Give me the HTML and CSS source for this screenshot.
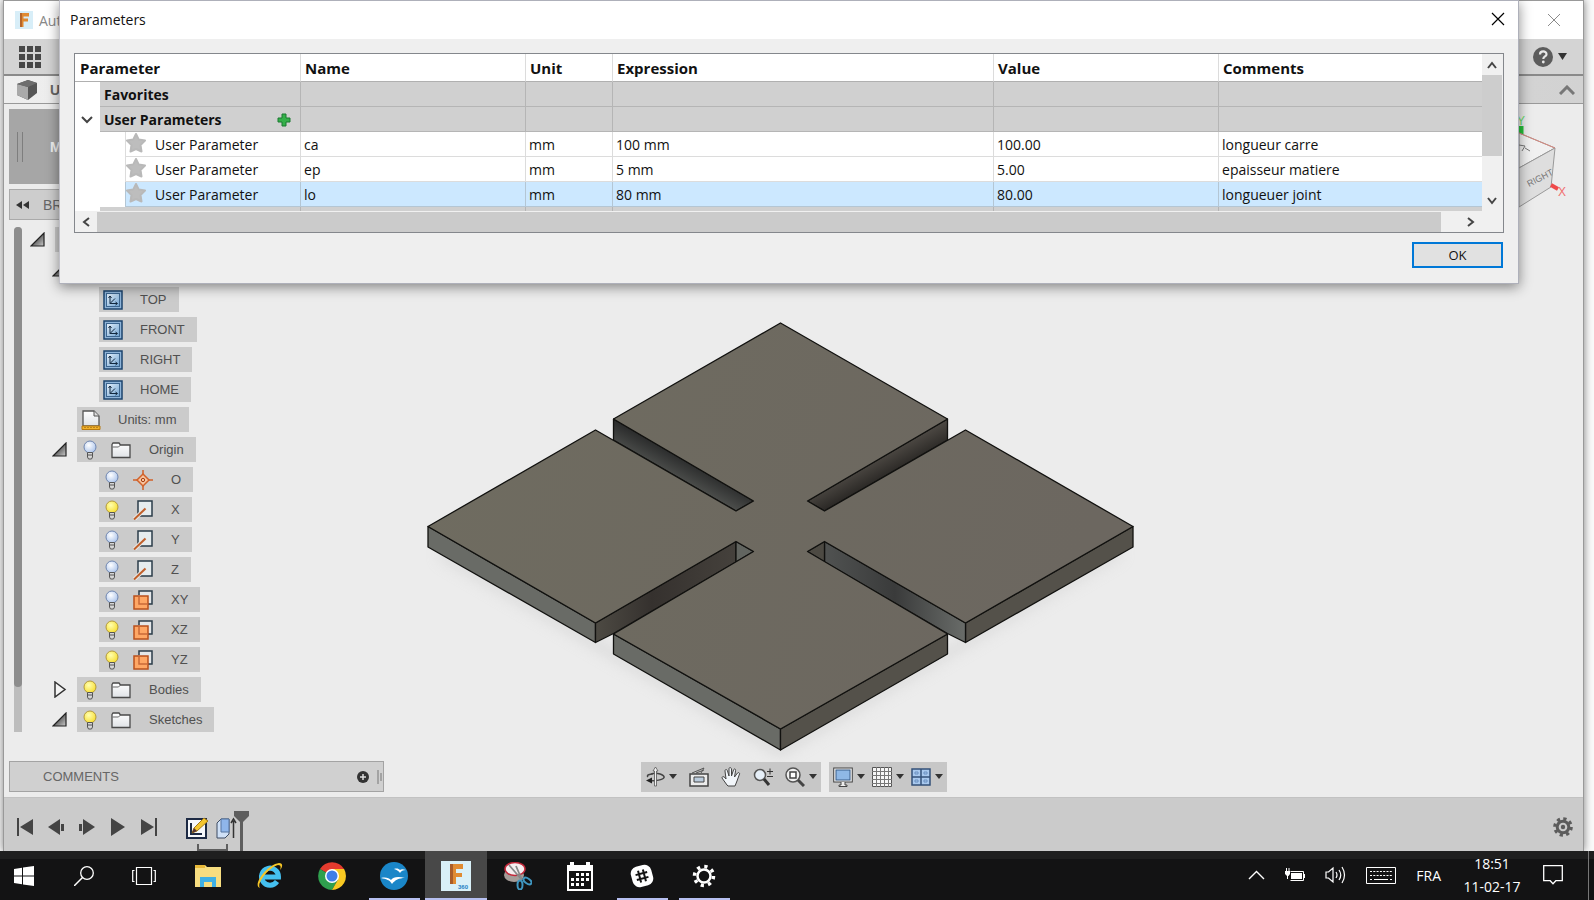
FILE: index.html
```html
<!DOCTYPE html>
<html lang="fr">
<head>
<meta charset="utf-8">
<title>Parameters</title>
<link rel="stylesheet" href="styles.css">
</head>
<body>
<svg class="defs" width="0" height="0" aria-hidden="true">
  <defs>
    <linearGradient id="gBlue" x1="0" y1="0" x2="1" y2="1"><stop offset="0" stop-color="#e6f1fb"/><stop offset="1" stop-color="#6fa3d2"/></linearGradient>
    <linearGradient id="gPaper" x1="0" y1="0" x2="0" y2="1"><stop offset="0" stop-color="#fff"/><stop offset="1" stop-color="#dfe2e6"/></linearGradient>
    <linearGradient id="gTri" x1="0" y1="0" x2="1" y2="1"><stop offset="0.4" stop-color="#555"/><stop offset="1" stop-color="#ccc"/></linearGradient>
    <radialGradient id="gOff" cx="0.4" cy="0.35" r="0.7"><stop offset="0" stop-color="#fff"/><stop offset="1" stop-color="#a9c2ea"/></radialGradient>
    <radialGradient id="gOn" cx="0.4" cy="0.35" r="0.7"><stop offset="0" stop-color="#ffffb0"/><stop offset="1" stop-color="#f7dc2c"/></radialGradient>
    <symbol id="view" viewBox="0 0 20 20"><rect x="1" y="1" width="18" height="18" fill="#8fb4d8" stroke="#1c446e" stroke-width="1.500"/><rect x="3.500" y="3.500" width="13" height="13" fill="url(#gBlue)" stroke="#3c6690"/><path d="M7 6v7.500h7M7 13.500l5-5M5.500 8 7 6l1.500 2M12.500 12l2 1.500-2 1.500" fill="none" stroke="#12283f"/></symbol>
    <symbol id="off" viewBox="0 0 16 20"><circle cx="8" cy="7" r="6" fill="url(#gOff)" stroke="#6f86b0"/><path d="M5.500 12.500h5V17L9.500 19h-3l-1-2z" fill="#d5d5d5" stroke="#555"/><path d="M5 15h6" stroke="#555"/></symbol>
    <symbol id="on" viewBox="0 0 16 20"><circle cx="8" cy="7" r="6" fill="url(#gOn)" stroke="#b39a3c"/><path d="M5.500 12.500h5V17L9.500 19h-3l-1-2z" fill="#d5d5d5" stroke="#555"/><path d="M5 15h6" stroke="#555"/></symbol>
    <symbol id="folder" viewBox="0 0 20 18"><path d="M1 3.500 2 2h6l1.500 2H19v12.500H1z" fill="url(#gPaper)" stroke="#4a4a4a" stroke-width="1.300"/><path d="M1.500 6h6l2-2" fill="none" stroke="#666"/></symbol>
    <symbol id="axis" viewBox="0 0 20 20"><path d="M5 1h14v15H5z" fill="#e6ecee" stroke="#2b3d49" stroke-width="1.500"/><path d="M1 19.500 12.500 8.500" stroke="#e8e8e8" stroke-width="4"/><path d="M1 19.500 12.500 8.500" stroke="#c0602b" stroke-width="2"/></symbol>
    <symbol id="plane" viewBox="0 0 20 20"><path d="M6 5V1h13v13h-4" fill="#e4e7e9" stroke="#2b3d49" stroke-width="1.500"/><rect x="1" y="6" width="14" height="13" fill="#ffa765" stroke="#b9501d" stroke-width="1.500"/><path d="M6 6v8h9" fill="none" stroke="#c96a38" stroke-width="1.500"/></symbol>
    <symbol id="open" viewBox="0 0 15 15"><path d="M1 14 14 1v13z" fill="url(#gTri)" stroke="#222" stroke-width="1.200"/></symbol>
    <symbol id="star" viewBox="0 0 20 20"><path d="M10 1l2.800 5.600 6.200.9-4.500 4.500 1 6.500L10 16l-5.500 2.500 1-6.500L1 7.500l6.200-.9z" fill="#bdbdbd" stroke="#b9b9b9" stroke-width="2" stroke-linejoin="round"/></symbol>
    <symbol id="down" viewBox="0 0 8 5"><path d="M0 0h8L4 5z" fill="#333"/></symbol>
    <linearGradient id="wallL" gradientUnits="userSpaceOnUse" x1="690" y1="462" x2="678" y2="484"><stop offset="0" stop-color="#2c2d2d"/><stop offset="1" stop-color="#555754"/></linearGradient>
    <linearGradient id="wallR" gradientUnits="userSpaceOnUse" x1="871" y1="462" x2="883" y2="484"><stop offset="0" stop-color="#4a4641"/><stop offset="1" stop-color="#211f1d"/></linearGradient>
    <linearGradient id="wallB" x1="0" y1="0" x2="1" y2="0"><stop offset="0" stop-color="#4d4a43"/><stop offset=".4" stop-color="#35312e"/><stop offset="1" stop-color="#45413c"/></linearGradient>
    <linearGradient id="wallC" x1="0" y1="0" x2="1" y2="0"><stop offset="0" stop-color="#505251"/><stop offset=".5" stop-color="#3a3b3b"/><stop offset="1" stop-color="#696c69"/></linearGradient>
    <linearGradient id="face" x1="0" y1="0" x2="1" y2="0.200"><stop offset="0" stop-color="#6f6c60"/><stop offset="1" stop-color="#6c6760"/></linearGradient>
    <filter id="soft" x="-10%" y="-10%" width="120%" height="130%"><feGaussianBlur stdDeviation="7"/></filter>
  </defs>
</svg>

<div class="desktop">
  <main class="app">
    <header class="app-title">
      <svg width="18" height="18" viewBox="0 0 18 18"><rect width="18" height="18" fill="#d8eef8"/><path d="M5 2h9v3.500H8.500v2H13v3H8.500V16H5z" fill="#e08a32"/><path d="M5 2h2v14H5z" fill="#b5652a"/></svg>
      <span>Aut</span>
      <button class="icon app-close" aria-label="Close application"><svg width="14" height="14" viewBox="0 0 14 14"><path d="M1 1l12 12M13 1 1 13" stroke="#8b8b8b" fill="none"/></svg></button>
    </header>
    <div class="toolbar">
      <button class="icon" aria-label="Data panel"><svg width="22" height="22" viewBox="0 0 22 22" fill="#484848"><path d="M0 0h6v6H0zM8 0h6v6H8zM16 0h6v6h-6zM0 8h6v6H0zM8 8h6v6H8zM16 8h6v6h-6zM0 16h6v6H0zM8 16h6v6H8zM16 16h6v6h-6z"/></svg></button>
      <button class="icon help" aria-label="Help"><svg width="34" height="20" viewBox="0 0 34 20"><circle cx="10" cy="10" r="10" fill="#5c5c5c"/><path d="M7 7.500c0-4 6.500-4 6.500-.3C13.500 9.500 10.300 9.500 10.300 12" fill="none" stroke="#e8e8e8" stroke-width="2.200"/><circle cx="10.300" cy="15" r="1.400" fill="#e8e8e8"/><path d="M25 6h9l-4.500 7z" fill="#333"/></svg></button>
    </div>
    <div class="tabs">
      <svg width="22" height="20" viewBox="0 0 22 20"><path d="M1 4 12 0l9 3v10l-9 7L1 15z" fill="#565656"/><path d="M1 4l11 3v13L1 15z" fill="#a9a9a9"/><path d="M1 4 12 0l9 3-9 4z" fill="#6d6d6d"/></svg>
      <span>U</span>
      <button class="icon fold" aria-label="Collapse ribbon"><svg width="16" height="10" viewBox="0 0 16 10"><path d="M1 9l7-7 7 7" fill="none" stroke="#777" stroke-width="3"/></svg></button>
    </div>

    <section class="work">
      <svg class="scene" viewBox="4 103 1579 693" aria-label="3D model">
        <path d="M440 546 595 636l18 11 167 96 167-96 18-11 156-90v10L780 756 440 558z" fill="#c9c9c9" opacity=".5" filter="url(#soft)"/>
        <g stroke="#11110f" stroke-width="1.300" stroke-linejoin="round">
          <path d="M428 525.500v20.500l167.500 95.500V622z" fill="#696b66"/>
          <path d="M1133 525.500v20.500l-167.500 95.500V622z" fill="#54514a"/>
          <path d="M613.500 418v21L736 510l17.500-10z" fill="url(#wallL)"/>
          <path d="M947.500 418v21L824.500 510l-17-10z" fill="url(#wallR)"/>
          <path d="M595.500 622v19.500l18-9L736 561v-20.500z" fill="url(#wallB)"/>
          <path d="M736 540.500V561l17.500-10.500z" fill="#626560"/>
          <path d="M965.500 622v19.500l-18-9L824.500 561v-20.500z" fill="url(#wallC)"/>
          <path d="M824.500 540.500V561l-17-10.500z" fill="#4d4a43"/>
          <path d="M613.500 633v20L780.500 749v-21z" fill="#696b66"/>
          <path d="M947.500 633v20L780.500 749v-21z" fill="#54514a"/>
          <path d="M780.500 322l167 96-140 82 17 10 141-81 167.500 96.500L965.500 622l-141-81.500-17 10 140 82.500-167 95-167-95 140-82.500-17.500-10L595.500 622 428 525.500 595.500 429 736 510l17.500-10-140-82z" fill="url(#face)"/>
        </g>
        <g>
          <path d="M1521 134v-9" stroke="#25c23a" stroke-width="5"/>
          <text class="axis-y" x="1517" y="124">Y</text>
          <path d="M1519 132 1555 147l-36 20z" fill="#f1f1f1" stroke="#888"/>
          <path d="M1519 167 1555 147l-4 39-32 20z" fill="#dedede" stroke="#999"/>
          <path d="M1519 132l36 15" stroke="#d98a80"/>
          <path d="M1519 144l6 1-3 5M1525 147l5 3" stroke="#777" fill="none"/>
          <text class="cube-text" transform="translate(1529 186) rotate(-27)">RIGHT</text>
          <path d="M1551 184l7 4" stroke="#ef4a4a" stroke-width="4"/>
          <text class="axis-x" x="1558" y="195">X</text>
        </g>
      </svg>

      <aside class="side">
        <button class="mode"><svg width="8" height="30" viewBox="0 0 8 30"><path d="M1.500 0v30M6.500 0v30" stroke="#7e7e7e"/></svg><span>M</span></button>
        <div class="browser-head"><svg width="13" height="8" viewBox="0 0 13 8"><path d="M6 0v8L0 4zM13 0v8L7 4z" fill="#333"/></svg><span>BR</span></div>
        <div class="tree">
          <div class="tree-scroll"><div class="tree-thumb"></div></div>
          <ul>
            <li class="l0"><button class="tw" aria-label="Toggle root"><svg width="15" height="15"><use href="#open"/></svg></button><span class="chip stub"></span></li>
            <li class="l1"><button class="tw" aria-label="Toggle views"><svg width="15" height="15"><use href="#open"/></svg></button></li>
            <li class="l2"><span class="chip v"><svg width="20" height="20"><use href="#view"/></svg>TOP</span></li>
            <li class="l2"><span class="chip v"><svg width="20" height="20"><use href="#view"/></svg>FRONT</span></li>
            <li class="l2"><span class="chip v"><svg width="20" height="20"><use href="#view"/></svg>RIGHT</span></li>
            <li class="l2"><span class="chip v"><svg width="20" height="20"><use href="#view"/></svg>HOME</span></li>
            <li class="l1"><span class="tw"></span><span class="chip v"><svg width="20" height="20" viewBox="0 0 20 20"><path d="M2 1h11l5 5v10H2z" fill="url(#gPaper)" stroke="#555" stroke-width="1.300"/><path d="M13 1v5h5" fill="#ddd" stroke="#555"/><path d="M1 16h18v3.500H1z" fill="#f2b22c" stroke="#b87a10"/><path d="M4 17v1M7 17v1M10 17v1M13 17v1M16 17v1" stroke="#8a5a08"/></svg>Units: mm</span></li>
            <li class="l1"><button class="tw" aria-label="Toggle Origin"><svg width="15" height="15"><use href="#open"/></svg></button><span class="chip"><svg width="16" height="20"><use href="#off"/></svg><svg class="ic" width="20" height="18"><use href="#folder"/></svg>Origin</span></li>
            <li class="l2"><span class="chip"><svg width="16" height="20"><use href="#off"/></svg><svg class="ic" width="20" height="20" viewBox="0 0 20 20"><path d="M10 4l6 6-6 6-6-6z" fill="#f7c4a0" stroke="#d2622a" stroke-width="1.500"/><path d="M10 0v5M10 15v5M0 10h5M15 10h5" stroke="#d2622a" stroke-width="1.500"/><circle cx="10" cy="10" r="1.700" fill="none" stroke="#a23d10"/></svg>O</span></li>
            <li class="l2"><span class="chip"><svg width="16" height="20"><use href="#on"/></svg><svg class="ic" width="20" height="20"><use href="#axis"/></svg>X</span></li>
            <li class="l2"><span class="chip"><svg width="16" height="20"><use href="#off"/></svg><svg class="ic" width="20" height="20"><use href="#axis"/></svg>Y</span></li>
            <li class="l2"><span class="chip"><svg width="16" height="20"><use href="#off"/></svg><svg class="ic" width="20" height="20"><use href="#axis"/></svg>Z</span></li>
            <li class="l2"><span class="chip"><svg width="16" height="20"><use href="#off"/></svg><svg class="ic" width="20" height="20"><use href="#plane"/></svg>XY</span></li>
            <li class="l2"><span class="chip"><svg width="16" height="20"><use href="#on"/></svg><svg class="ic" width="20" height="20"><use href="#plane"/></svg>XZ</span></li>
            <li class="l2"><span class="chip"><svg width="16" height="20"><use href="#on"/></svg><svg class="ic" width="20" height="20"><use href="#plane"/></svg>YZ</span></li>
            <li class="l1"><button class="tw" aria-label="Toggle Bodies"><svg width="15" height="17" viewBox="0 0 15 17"><path d="M3 1l10 7.500L3 16z" fill="#f4f4f4" stroke="#333" stroke-width="1.500"/></svg></button><span class="chip"><svg width="16" height="20"><use href="#on"/></svg><svg class="ic" width="20" height="18"><use href="#folder"/></svg>Bodies</span></li>
            <li class="l1"><button class="tw" aria-label="Toggle Sketches"><svg width="15" height="15"><use href="#open"/></svg></button><span class="chip"><svg width="16" height="20"><use href="#on"/></svg><svg class="ic" width="20" height="18"><use href="#folder"/></svg>Sketches</span></li>
          </ul>
        </div>
      </aside>

      <div class="bottom">
        <div class="comments"><span>COMMENTS</span><button class="icon" aria-label="Add comment"><svg width="12" height="12" viewBox="0 0 12 12"><circle cx="6" cy="6" r="6" fill="#333"/><path d="M6 3v6M3 6h6" stroke="#ddd" stroke-width="1.500"/></svg></button><svg width="5" height="14" viewBox="0 0 5 14"><path d="M1 0v14M4 3v8" stroke="#777"/></svg></div>
        <nav class="navbars">
          <div class="navbar">
            <button class="icon" aria-label="Orbit"><svg width="20" height="20" viewBox="0 0 20 20"><path d="M6 7C12 5 20 8 19 10.500S10 14 5 13.500M3 10c-2-2 2-3 5-3" fill="none" stroke="#444" stroke-width="1.500"/><path d="M7 10.500v6l-6-3z" fill="#222"/><path d="M10.500 0l2.500 4h-1.500v15h-2V4H8z" fill="#f3f3f3" stroke="#555" stroke-width=".8"/></svg><svg class="dd" width="8" height="5"><use href="#down"/></svg></button>
            <button class="icon" aria-label="Look at"><svg width="20" height="20" viewBox="0 0 20 20"><path d="M3 6l12-5-3 5M7 6l8-3" fill="none" stroke="#555"/><path d="M1 7h18v12H1z" fill="#ececec" stroke="#444" stroke-width="1.500"/><path d="M5 10h10v5H5z" fill="#bcd" stroke="#444"/></svg></button>
            <button class="icon" aria-label="Pan"><svg width="20" height="20" viewBox="0 0 20 20"><path d="M6 18 1 11c0-2 2-2 4 1L4 4c0-2 2-2 2.500 0L8 9V2c0-2 2-2 2.500 0V9l2-6c1-2 2.500-1 2 1L13.500 10l3-4c1-1 2.500 0 2 1L16 14l-2 5H7z" fill="#f2f6fa" stroke="#444"/></svg></button>
            <button class="icon" aria-label="Zoom"><svg width="20" height="20" viewBox="0 0 20 20"><circle cx="7" cy="8" r="5.500" fill="#e6eff8" stroke="#555" stroke-width="1.500"/><path d="M11 12l5 6" stroke="#333" stroke-width="3"/><path d="M14 4.500h6M17 1.500v6M14 9.500h6" stroke="#333"/></svg></button>
            <button class="icon" aria-label="Fit"><svg width="20" height="20" viewBox="0 0 20 20"><circle cx="8" cy="8" r="7" fill="#f0f0f0" stroke="#555" stroke-width="1.500"/><rect x="5" y="5" width="6" height="6" fill="#fff" stroke="#444" stroke-width="1.500"/><path d="M13 13l6 6" stroke="#444" stroke-width="3"/></svg><svg class="dd" width="8" height="5"><use href="#down"/></svg></button>
          </div>
          <div class="navbar tight">
            <button class="icon" aria-label="Display"><svg width="20" height="20" viewBox="0 0 20 20"><rect x=".7" y="1" width="18.600" height="14" fill="#eee" stroke="#444"/><rect x="3" y="3" width="14" height="10" fill="#8fb8e6" stroke="#3a5f8a"/><path d="M8 15v3H6v1.500h8V18h-2v-3" fill="#eee" stroke="#444"/></svg><svg class="dd" width="8" height="5"><use href="#down"/></svg></button>
            <button class="icon" aria-label="Grid"><svg width="20" height="20" viewBox="0 0 20 20"><path d="M.5.500h19v19H.5z" fill="#f7f7f7" stroke="#555"/><path d="M4.500 0v20M8.500 0v20M12.500 0v20M16.500 0v20M0 4.500h20M0 8.500h20M0 12.500h20M0 16.500h20" stroke="#777"/></svg><svg class="dd" width="8" height="5"><use href="#down"/></svg></button>
            <button class="icon" aria-label="Viewports"><svg width="20" height="20" viewBox="0 0 20 20"><path d="M1 2h18v16H1z" fill="#a9c9ee" stroke="#35527a" stroke-width="1.500"/><path d="M10 2v16M1 10h18" stroke="#35527a" stroke-width="1.500"/><path d="M4 5h3v2H4zM13 5h3v2h-3zM4 13h3v2H4zM13 13h3v2h-3z" fill="none" stroke="#6b90c0"/></svg><svg class="dd" width="8" height="5"><use href="#down"/></svg></button>
          </div>
        </nav>
      </div>
    </section>

    <footer class="timeline">
      <button class="icon" aria-label="Go to start"><svg width="16" height="18" viewBox="0 0 16 18" fill="#444"><path d="M0 0h2v18H0zM16 1v16L3 9z"/></svg></button>
      <button class="icon" aria-label="Step back"><svg width="16" height="16" viewBox="0 0 16 16" fill="#444"><path d="M12 0v16L0 8zM13 5h3v7h-3z"/></svg></button>
      <button class="icon" aria-label="Step forward"><svg width="16" height="16" viewBox="0 0 16 16" fill="#444"><path d="M4 0v16l12-8zM0 5h3v7H0z"/></svg></button>
      <button class="icon" aria-label="Play"><svg width="16" height="18" viewBox="0 0 16 18" fill="#444"><path d="M1 0v18l14-9z"/></svg></button>
      <button class="icon" aria-label="Go to end"><svg width="16" height="18" viewBox="0 0 16 18" fill="#444"><path d="M14 0h2v18h-2zM0 1v16l13-8z"/></svg></button>
      <svg class="history" width="70" height="44" viewBox="182 806 70 44">
        <rect x="187" y="818" width="19" height="19" fill="#f6f8fb" stroke="#1d2a44" stroke-width="2"/><path d="M191 822v11h11" fill="none" stroke="#1d2a44" stroke-width="2"/><path d="M192 832l2-5 10-10 4 3-11 10z" fill="#f4c62f" stroke="#a27a18"/><path d="M192 832l2-5 3 3z" fill="#533"/>
        <path d="M217 822l4-4h8v15l-4 4h-8z" fill="#cfe0f6" stroke="#3c4b63"/><path d="M221 818h8v13h-8z" fill="#8fb6ea" stroke="#56749f"/>
        <path d="M233.500 837v-17M231 822l2.500-4 2.500 4" fill="none" stroke="#333" stroke-width="1.500"/>
        <path d="M234 810h15v5l-6 6h-3l-6-6z" fill="#5e5e5e"/><path d="M241.500 818v32" stroke="#5e5e5e" stroke-width="3"/>
        <path d="M198 843v6h29v-6" fill="none" stroke="#5e5e5e" stroke-width="2"/>
      </svg>
      <button class="icon gear" aria-label="Timeline settings"><svg width="20" height="20" viewBox="0 0 20 20"><circle cx="10" cy="10" r="8.300" fill="none" stroke="#5c5c5c" stroke-width="3" stroke-dasharray="3.260 3.260"/><circle cx="10" cy="10" r="5.800" fill="none" stroke="#5c5c5c" stroke-width="3"/><circle cx="10" cy="10" r="2.200" fill="#5c5c5c"/></svg></button>
    </footer>
  </main>

  <section class="dialog" role="dialog" aria-labelledby="dlg">
    <header class="dialog-title"><h1 id="dlg">Parameters</h1><button class="icon" aria-label="Close"><svg width="14" height="14" viewBox="0 0 14 14"><path d="M1 1l12 12M13 1 1 13" stroke="#000" stroke-width="1.200" fill="none"/></svg></button></header>
    <div class="dialog-body">
      <div class="grid-box">
        <table>
          <colgroup><col class="c-tw"><col class="c-tw"><col class="c-par"><col class="c-name"><col class="c-unit"><col class="c-exp"><col class="c-name"><col></colgroup>
          <thead><tr><th colspan="3" scope="col">Parameter</th><th scope="col">Name</th><th scope="col">Unit</th><th scope="col">Expression</th><th scope="col">Value</th><th scope="col">Comments</th></tr></thead>
          <tbody>
            <tr class="group"><td class="blank"></td><th colspan="2" scope="row">Favorites</th><td></td><td></td><td></td><td></td><td></td></tr>
            <tr class="group"><td class="blank"><button class="icon" aria-label="Collapse group"><svg width="12" height="8" viewBox="0 0 12 8"><path d="M1 1l5 5 5-5" fill="none" stroke="#444" stroke-width="2"/></svg></button></td><th colspan="2" scope="row"><div class="group-name"><span>User Parameters</span><button class="icon" aria-label="Add parameter"><svg width="14" height="14" viewBox="0 0 14 14"><path d="M5 1h4v4h4v4H9v4H5V9H1V5h4z" fill="#35b04a" stroke="#1b7a30"/></svg></button></div></th><td></td><td></td><td></td><td></td><td></td></tr>
            <tr><td class="blank"></td><td class="blank"></td><td class="name"><div class="param"><button class="icon" aria-label="Favorite ca"><svg width="20" height="20"><use href="#star"/></svg></button><span>User Parameter</span></div></td><td>ca</td><td>mm</td><td>100 mm</td><td>100.00</td><td>longueur carre</td></tr>
            <tr><td class="blank"></td><td class="blank"></td><td class="name"><div class="param"><button class="icon" aria-label="Favorite ep"><svg width="20" height="20"><use href="#star"/></svg></button><span>User Parameter</span></div></td><td>ep</td><td>mm</td><td>5 mm</td><td>5.00</td><td>epaisseur matiere</td></tr>
            <tr class="sel"><td class="blank"></td><td class="blank"></td><td class="name"><div class="param"><button class="icon" aria-label="Favorite lo"><svg width="20" height="20"><use href="#star"/></svg></button><span>User Parameter</span></div></td><td>lo</td><td>mm</td><td>80 mm</td><td>80.00</td><td>longueuer joint</td></tr>
            <tr class="group cut"><td class="blank"></td><th colspan="2"></th><td></td><td></td><td></td><td></td><td></td></tr>
          </tbody>
        </table>
        <div class="vbar"><button class="icon" aria-label="Scroll up"><svg width="10" height="8" viewBox="0 0 10 8"><path d="M1 7l4-5 4 5" fill="none" stroke="#444" stroke-width="2"/></svg></button><div class="vthumb"></div><button class="icon" aria-label="Scroll down"><svg width="10" height="8" viewBox="0 0 10 8"><path d="M1 1l4 5 4-5" fill="none" stroke="#444" stroke-width="2"/></svg></button></div>
        <div class="hbar"><button class="icon" aria-label="Scroll left"><svg width="8" height="10" viewBox="0 0 8 10"><path d="M7 1 2 5l5 4" fill="none" stroke="#444" stroke-width="2"/></svg></button><div class="hthumb"></div><button class="icon" aria-label="Scroll right"><svg width="8" height="10" viewBox="0 0 8 10"><path d="M1 1l5 4-5 4" fill="none" stroke="#444" stroke-width="2"/></svg></button></div>
      </div>
      <button class="ok">OK</button>
    </div>
  </section>
</div>

<footer class="taskbar">
  <div class="apps">
    <button class="icon start" aria-label="Start"><svg width="20" height="20" viewBox="0 0 20 20" fill="#fff"><path d="M0 3l8-1.200V9.500H0zM9 1.600 20 0v9.500H9zM0 10.500h8v7.700L0 17zM9 10.500h11V20L9 18.400z"/></svg></button>
    <button class="icon search" aria-label="Search"><svg width="20" height="20" viewBox="0 0 20 20"><circle cx="13" cy="7" r="6.300" fill="none" stroke="#fff" stroke-width="1.300"/><path d="M8.500 11.500 0 20" stroke="#fff" stroke-width="1.500"/></svg></button>
    <button class="icon views" aria-label="Task view"><svg width="24" height="20" viewBox="0 0 24 20" fill="none" stroke="#fff" stroke-width="1.200"><path d="M4.500 1.500h15v17h-15zM2.500 4.500H.7v11h1.800M21.500 4.500h1.800v11h-1.800"/></svg></button>
    <button class="icon task" aria-label="File Explorer"><svg width="26" height="24" viewBox="0 0 26 24"><path d="M0 1h10l2 2h14v20H0z" fill="#f7dd80"/><path d="M0 1h10v3H0z" fill="#e8b93a"/><path d="M5 23V13h16v10h-4v-5H9v5z" fill="#3fb0e4"/></svg></button>
    <button class="icon task" aria-label="Internet Explorer"><svg width="28" height="28" viewBox="0 0 28 28"><path d="M21 19.500A8.500 8.500 0 1 1 22.500 15H8" fill="none" stroke="#45c0f0" stroke-width="5"/><path d="M4 26C-4 24 10 3 23 1c5 0 3 5 1 7 1-3 1-5-2-5C13 5 0 22 4 26z" fill="#f6c627"/></svg></button>
    <button class="icon task" aria-label="Chrome"><svg width="28" height="28" viewBox="0 0 28 28"><path d="M14 14 2 7a14 14 0 0 1 24.100 0z" fill="#e33b2e"/><path d="M14 14 2 7a14 14 0 0 0 12 21l6-10.500z" fill="#2fa04e"/><path d="M14 7h12.100A14 14 0 0 1 14 28l6-10.500z" fill="#f9c922"/><circle cx="14" cy="14" r="7" fill="#fff"/><circle cx="14" cy="14" r="5.500" fill="#3f7ee8"/></svg></button>
    <button class="icon task run" aria-label="OpenOffice"><svg width="28" height="28" viewBox="0 0 28 28"><circle cx="14" cy="14" r="14" fill="#1a86c8"/><path d="M14 7c3-1 5 0 6 1 1-1 3-1 6 0-3 0-5 1-6 3-1-2-3-3-6-4zM1 16c5-1 8 0 10 2 2-3 7-4 14-2-6 0-10 2-13 6-2-4-6-5-11-6z" fill="#fff"/></svg></button>
    <button class="icon task run current" aria-label="Fusion 360"><svg width="30" height="30" viewBox="0 0 30 30"><rect width="30" height="30" fill="#d9f0f8"/><path d="M9 3h13v5h-7v4h6v4h-6v7H9z" fill="#e08b32"/><path d="M9 3h3v20H9z" fill="#a95c28"/><text class="mini" x="17" y="28">360</text></svg></button>
    <button class="icon task" aria-label="Snipping Tool"><svg width="28" height="28" viewBox="0 0 28 28"><ellipse cx="10" cy="13" rx="10" ry="7" fill="#a59c98"/><ellipse cx="11" cy="7" rx="10" ry="6.500" fill="#f6eef0" stroke="#c2283a" stroke-width="1.500"/><path d="M5 3l13 15M12 4l6 14" stroke="#888" stroke-width="1.800"/><ellipse cx="16" cy="23" rx="2.500" ry="4.500" fill="none" stroke="#3f96c0" stroke-width="2"/><ellipse cx="23.500" cy="19" rx="4.500" ry="2.500" transform="rotate(35 23.500 19)" fill="none" stroke="#3f96c0" stroke-width="2"/></svg></button>
    <button class="icon task" aria-label="Calendar"><svg width="26" height="29" viewBox="0 0 26 29"><path d="M0 3h3V0h4v3h12V0h4v3h3v26H0z" fill="#fff"/><path d="M2 9h22v18H2z" fill="#141414"/><path d="M9 11h3v3H9zM14 11h3v3h-3zM19 11h3v3h-3zM4 16h3v3H4zM9 16h3v3H9zM14 16h3v3h-3zM19 16h3v3h-3zM4 21h3v3H4zM9 21h3v3H9zM14 21h3v3h-3z" fill="#fff"/></svg></button>
    <button class="icon task run" aria-label="Slack"><svg width="24" height="24" viewBox="0 0 24 24"><g transform="rotate(-15 12 12)"><rect x="1.500" y="1.500" width="21" height="21" rx="7" fill="#fff"/><path d="M9.500 6v12M14.500 6v12M6 9.500h12M6 14.500h12" stroke="#141414" stroke-width="2"/></g></svg></button>
    <button class="icon task run" aria-label="Settings"><svg width="24" height="24" viewBox="0 0 24 24" fill="none" stroke="#fff"><circle cx="12" cy="12" r="6.500" stroke-width="2.500"/><circle cx="12" cy="12" r="9.500" stroke-width="3.500" stroke-dasharray="3.230 4.230"/></svg></button>
  </div>
  <div class="tray">
    <button class="icon" aria-label="Hidden icons"><svg width="17" height="10" viewBox="0 0 17 10"><path d="M1 9l7.500-7.500L16 9" fill="none" stroke="#fff" stroke-width="1.400"/></svg></button>
    <svg width="20" height="14" viewBox="0 0 20 14"><path d="M5.500 3.500h13v9h-13" fill="none" stroke="#fff"/><path d="M6 5h11v6H6zM18 6h2v4h-2zM0 3h5v3L3.500 8H3v3H2V8L0 6zM1 0h1v3H1zM3.500 0h1v3h-1z" fill="#fff"/></svg>
    <svg width="21" height="18" viewBox="0 0 21 18" fill="none" stroke="#fff" stroke-width="1.200"><path d="M1 6h2.500L8 2v14l-4.500-4H1zM11 6q2 3 0 6M14 4q3.500 5 0 10M17 1q5 8 0 16"/></svg>
    <svg width="30" height="17" viewBox="0 0 30 17" fill="none" stroke="#fff"><path d="M.5.500h29v16H.5z"/><path d="M4 4.500h22M4 8.500h22" stroke-dasharray="2 1.300"/><path d="M4 12.500h2M8 12.500h14M24 12.500h2"/></svg>
    <span class="lang">FRA</span>
    <time class="clock"><span>18:51</span><span>11-02-17</span></time>
    <button class="icon note" aria-label="Notifications"><svg width="20" height="20" viewBox="0 0 20 20"><path d="M.7.700h18.600v15h-6.500l-2.800 3-2.800-3H.7z" fill="none" stroke="#fff" stroke-width="1.300"/></svg></button>
    <span class="peek"></span>
  </div>
</footer>
</body>
</html>
```
FILE: styles.css
```css
* { box-sizing: border-box; }
body { margin: 0; min-height: 100vh; display: grid; grid-template-rows: 1fr 50px; font-family: "Liberation Sans", Arial, sans-serif; font-size: 14px; color: #111; background: #fff; }
svg { display: block; flex: none; }
.defs { position: absolute; }
button { font: inherit; color: inherit; }
.icon { background: none; border: 0; padding: 0; display: flex; align-items: center; justify-content: center; }

.desktop { position: relative; min-height: 0; padding: 0 10px 0 3px; background: #fafafa; overflow: hidden; }
.app { height: 100%; display: grid; grid-template-rows: 38px 37px 28px 1fr 54px; border: solid #999; border-width: 1px 1px 0; background: #ebebeb; box-shadow: 0 0 8px rgba(0,0,0,.5); }
.app-title { display: flex; align-items: center; gap: 6px; padding: 0 22px 0 11px; background: #fff; color: #888; font-family: "Open Sans", "Noto Sans", sans-serif; font-size: 14px; }
.app-close, .help, .fold, .gear { margin-left: auto; }
.toolbar { display: flex; align-items: center; padding: 0 16px 0 15px; background: #d4d4d4; border-bottom: 2px solid #8a8a8a; }
.tabs { display: flex; align-items: center; gap: 12px; padding: 0 8px 0 12px; background: linear-gradient(90deg, #eee, #d2d2d2); border-bottom: 1px solid #999; color: #666; font-weight: bold; }

.work { display: grid; grid-template: minmax(0, 1fr) / minmax(0, 1fr); min-height: 0; background: #ececec; }
.work > * { grid-area: 1 / 1; }
.scene { width: 100%; height: 100%; }
.cube-text { font-size: 9px; fill: #777; }
.axis-x { font-size: 12px; fill: #f07070; }
.axis-y { font-size: 12px; fill: #6ade6a; }

.side { padding: 5px; width: 300px; }
.mode { display: flex; align-items: center; gap: 26px; width: 130px; height: 75px; padding: 0 0 0 7px; border: 0; background: #a6a6a6; color: #f0f0f0; font-weight: bold; }
.browser-head { display: flex; align-items: center; gap: 14px; width: 130px; height: 31px; margin-top: 5px; padding-left: 6px; background: #cdcdcd; border: 1px solid #aaa; color: #666; }
.tree { display: flex; gap: 8px; margin-top: 7px; padding-left: 5px; }
.tree-scroll { width: 8px; background: #bdbdbd; border-radius: 4px 4px 0 0; }
.tree-thumb { height: 91%; background: #8d8d8d; border-radius: 4px; }
.tree ul { list-style: none; margin: 0; padding: 0; display: grid; gap: 5px; }
.tree li { display: flex; align-items: center; gap: 9px; height: 25px; }
.l1 { padding-left: 22px; }
.l2 { padding-left: 69px; }
.tw { width: 16px; background: none; border: 0; padding: 0; }
.chip { display: flex; align-items: center; height: 25px; padding: 0 12px 0 5px; background: #cbcbcb; color: #505050; font-size: 13px; }
.chip.v { padding: 0 12px 0 4px; gap: 17px; }
.chip .ic { margin: 0 18px 0 13px; }
.stub { width: 60px; }

.bottom { align-self: end; display: grid; grid-template-columns: minmax(0, 1fr) auto minmax(0, 1fr); align-items: center; padding: 0 5px 5px; }
.comments { display: flex; align-items: center; gap: 8px; width: 375px; height: 31px; padding: 0 1px 0 33px; background: #d0d0d0; border: 1px solid #a3a3a3; color: #666; font-size: 13px; }
.comments span { margin-right: auto; }
.navbars { display: flex; gap: 8px; }
.navbar { display: flex; align-items: center; gap: 12px; height: 30px; padding: 0 4px; background: #c7c7c7; }
.navbar button { gap: 4px; }
.navbar.tight { gap: 7px; }

.timeline { display: flex; align-items: center; padding: 0 10px 0 5px; background: #cbcbcb; border-top: 1px solid #c2c2c2; }
.timeline .icon { width: 31px; margin-top: 4px; }
.timeline .icon.gear { width: 20px; margin-left: auto; }
.history { align-self: end; margin-left: 18px; }

.dialog { position: absolute; top: 0; left: 59px; right: 75px; background: #efefef; border: 1px solid #aeb0ba; border-left-color: #c0c0c8; box-shadow: 0 3px 12px rgba(0,0,0,.45); font-family: "Open Sans", "Noto Sans", sans-serif; font-size: 14px; }
.dialog-title { display: flex; align-items: center; justify-content: space-between; height: 38px; padding: 0 13px 2px 10px; background: #fff; }
.dialog-title h1 { margin: 0; font-size: 14px; font-weight: normal; }
.dialog-body { display: flex; flex-direction: column; gap: 9px; padding: 14px 14px 15px 14px; }
.grid-box { display: grid; grid-template-columns: minmax(0, 1fr) 21px; grid-template-rows: auto 21px; border: 1px solid #84878c; background: #f0f0f0; }
table { width: 100%; table-layout: fixed; border-collapse: separate; border-spacing: 0; background: #fff; }
.c-tw { width: 25px; }
.c-par { width: 175px; }
.c-name { width: 225px; }
.c-unit { width: 87px; }
.c-exp { width: 381px; }
th, td { height: 25px; padding: 2px 0 0 3px; text-align: left; font-weight: normal; line-height: 20px; border-left: 1px solid #dcdcdc; border-bottom: 1px solid #dcdcdc; white-space: nowrap; }
thead th { height: 28px; padding: 0 0 0 4px; font-size: 15px; font-weight: bold; border-bottom-color: #b0b0b0; }
thead th:first-child { border-left: 0; padding-left: 5px; }
.group th, .group td { background: #d0d0d0; border-color: #b5b5b5; }
.group th { font-weight: bold; border-left: 0; padding-left: 4px; }
td.name { padding: 0; }
td.blank, .group td.blank { background: #fff; border: 0; padding: 0 0 0 6px; }
.sel td { background: #cce8ff; border-color: #b4c6d4; }
.sel td.blank { background: #fff; }
.cut th, .cut td, .cut td.blank { height: 4px; border-bottom: 0; padding: 0; }
.group-name { display: flex; align-items: center; justify-content: space-between; padding-right: 9px; }
.param { display: flex; align-items: center; gap: 9px; height: 24px; }
.param .icon { padding-bottom: 3px; }
.param span { padding-top: 2px; }
.vbar { display: flex; flex-direction: column; justify-content: space-between; padding-right: 1px; }
.vbar .icon { height: 21px; }
.vthumb { height: 81px; margin-bottom: auto; background: #cdcdcd; }
.hbar { display: flex; padding-top: 1px; }
.hbar .icon { width: 22px; }
.hthumb { flex: 1; margin-right: 19px; background: #cbcbcb; }
.ok { align-self: flex-end; width: 91px; height: 26px; margin-right: 1px; padding: 0; background: #e1e1e1; border: 2px solid #0078d7; font-size: 13px; line-height: 20px; }

.taskbar { display: flex; justify-content: space-between; background: linear-gradient(#1f1f1f 8px, #131314 8px); color: #fff; font-family: "Open Sans", "Noto Sans", sans-serif; }
.apps, .tray { display: flex; align-items: center; }
.apps > * { height: 50px; }
.start { width: 48px; }
.search { width: 72px; }
.views { width: 48px; margin-right: 9px; }
.task { width: 62px; }
.run { background: linear-gradient(#b6bff0, #b6bff0) bottom center / 51px 3px no-repeat; }
.run.current { background: linear-gradient(#b6bff0, #b6bff0) bottom / 100% 3px no-repeat #484848; }
.mini { font: bold 6px "Liberation Sans", sans-serif; fill: #1d80c4; }
.tray { gap: 20px; font-size: 14px; }
.tray > * { margin-bottom: 2px; }
.clock { display: flex; flex-direction: column; align-items: center; line-height: 23px; width: 60px; }
.tray .note { margin-right: 5px; }
.tray .peek { width: 6px; height: 50px; margin: 0; border-left: 1px solid #777; }
.lang, .tray .clock { margin-right: 1px; }
```
